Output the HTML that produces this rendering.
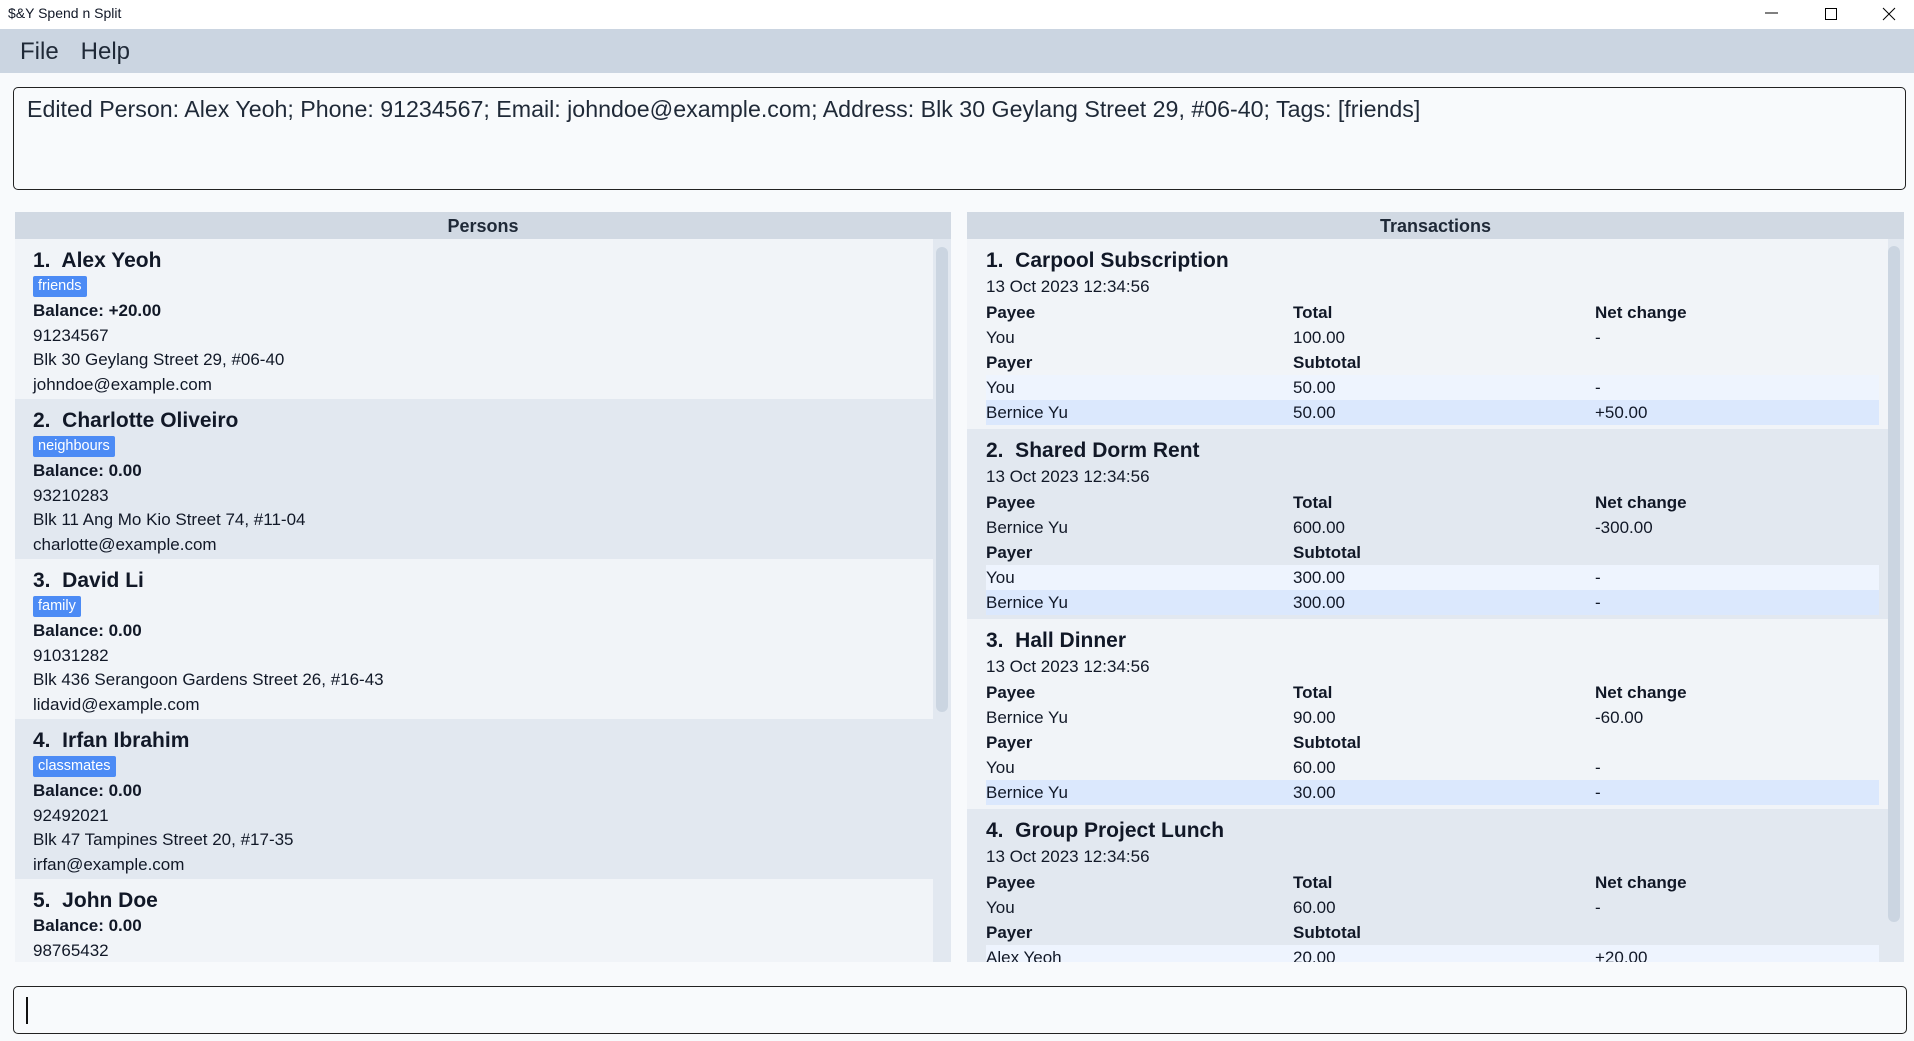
<!DOCTYPE html>
<html><head><meta charset="utf-8"><style>
*{margin:0;padding:0;box-sizing:border-box}
body{width:1914px;height:1041px;background:#f8fafc;font-family:"Liberation Sans",sans-serif;color:#111827;position:relative;overflow:hidden}
.abs{position:absolute}
#title{left:0;top:0;width:1914px;height:29px;background:#fff;font-size:14px;line-height:22px}
#menu{left:0;top:29px;width:1914px;height:44px;background:#cbd5e1;font-size:24px;line-height:46px;color:#1f2937}
#result{left:13px;top:87px;width:1893px;height:103px;border:1.5px solid #222;border-radius:5px;font-size:23.2px;padding:8px 13px;color:#1f2937}
.panel{top:212px;height:750px;overflow:hidden;background:#e2e8f0}
.hdr{height:27px;background:#d1d9e3;text-align:center;font-weight:bold;font-size:18px;line-height:28px;color:#1f2937}
.pcard{height:160px;padding:9px 0 0 18px;font-size:17px}
.odd{background:#f1f4f8}.even{background:#e2e8f0}
.name{font-size:21px;font-weight:bold;line-height:26px}
.tag{display:inline-block;background:#4c8bf5;color:#fff;font-size:14.5px;line-height:21px;padding:0 5px;border-radius:2px;margin:2px 0}
.ln{line-height:24.5px}
.b{font-weight:bold}
.tcard{height:190px;padding:9px 0 0 19px;font-size:17px}
.row{display:flex;height:25px;line-height:25px;width:893px}
.row div:nth-child(1){width:307px}.row div:nth-child(2){width:302px}
.h1{background:#eef4fe}.h2{background:#dbe8fd}
.sb{background:#cbd5e1;border-radius:6px;width:12px}
#cmd{left:13px;top:986px;width:1894px;height:48px;border:1.5px solid #222;border-radius:5px}
</style></head><body>
<div id="title" class="abs"><span style="position:absolute;left:8px;top:2px">$&amp;Y Spend n Split</span>
<svg class="abs" style="left:1765px;top:4px" width="140" height="20"><line x1="0" y1="9" x2="13" y2="9" stroke="#000"/><rect x="60.5" y="4.5" width="11" height="11" fill="none" stroke="#000"/><path d="M118 4L130 16M130 4L118 16" stroke="#000"/></svg></div>
<div id="menu" class="abs"><span style="margin-left:20px">File</span><span style="margin-left:22px">Help</span></div>
<div id="result" class="abs">Edited Person: Alex Yeoh; Phone: 91234567; Email: johndoe@example.com; Address: Blk 30 Geylang Street 29, #06-40; Tags: [friends]</div>

<div class="panel abs" style="left:15px;width:936px">
<div class="hdr">Persons</div>
<div style="width:918px">
<div class="pcard odd"><div class="name">1.&nbsp; Alex Yeoh</div><span class="tag">friends</span><div class="ln b">Balance: +20.00</div><div class="ln">91234567</div><div class="ln">Blk 30 Geylang Street 29, #06-40</div><div class="ln">johndoe@example.com</div></div>
<div class="pcard even"><div class="name">2.&nbsp; Charlotte Oliveiro</div><span class="tag">neighbours</span><div class="ln b">Balance: 0.00</div><div class="ln">93210283</div><div class="ln">Blk 11 Ang Mo Kio Street 74, #11-04</div><div class="ln">charlotte@example.com</div></div>
<div class="pcard odd"><div class="name">3.&nbsp; David Li</div><span class="tag">family</span><div class="ln b">Balance: 0.00</div><div class="ln">91031282</div><div class="ln">Blk 436 Serangoon Gardens Street 26, #16-43</div><div class="ln">lidavid@example.com</div></div>
<div class="pcard even"><div class="name">4.&nbsp; Irfan Ibrahim</div><span class="tag">classmates</span><div class="ln b">Balance: 0.00</div><div class="ln">92492021</div><div class="ln">Blk 47 Tampines Street 20, #17-35</div><div class="ln">irfan@example.com</div></div>
<div class="pcard odd"><div class="name">5.&nbsp; John Doe</div><div class="ln b">Balance: 0.00</div><div class="ln">98765432</div></div>
</div>
<div class="sb abs" style="left:921px;top:35px;height:465px"></div>
</div>

<div class="panel abs" style="left:967px;width:937px">
<div class="hdr">Transactions</div>
<div style="width:921px">
<div class="tcard odd"><div class="name">1.&nbsp; Carpool Subscription</div><div style="line-height:26px">13 Oct 2023 12:34:56</div>
<div class="row b"><div>Payee</div><div>Total</div><div>Net change</div></div>
<div class="row"><div>You</div><div>100.00</div><div>-</div></div>
<div class="row b"><div>Payer</div><div>Subtotal</div><div></div></div>
<div class="row h1"><div>You</div><div>50.00</div><div>-</div></div>
<div class="row h2"><div>Bernice Yu</div><div>50.00</div><div>+50.00</div></div></div>
<div class="tcard even"><div class="name">2.&nbsp; Shared Dorm Rent</div><div style="line-height:26px">13 Oct 2023 12:34:56</div>
<div class="row b"><div>Payee</div><div>Total</div><div>Net change</div></div>
<div class="row"><div>Bernice Yu</div><div>600.00</div><div>-300.00</div></div>
<div class="row b"><div>Payer</div><div>Subtotal</div><div></div></div>
<div class="row h1"><div>You</div><div>300.00</div><div>-</div></div>
<div class="row h2"><div>Bernice Yu</div><div>300.00</div><div>-</div></div></div>
<div class="tcard odd"><div class="name">3.&nbsp; Hall Dinner</div><div style="line-height:26px">13 Oct 2023 12:34:56</div>
<div class="row b"><div>Payee</div><div>Total</div><div>Net change</div></div>
<div class="row"><div>Bernice Yu</div><div>90.00</div><div>-60.00</div></div>
<div class="row b"><div>Payer</div><div>Subtotal</div><div></div></div>
<div class="row"><div>You</div><div>60.00</div><div>-</div></div>
<div class="row h2"><div>Bernice Yu</div><div>30.00</div><div>-</div></div></div>
<div class="tcard even"><div class="name">4.&nbsp; Group Project Lunch</div><div style="line-height:26px">13 Oct 2023 12:34:56</div>
<div class="row b"><div>Payee</div><div>Total</div><div>Net change</div></div>
<div class="row"><div>You</div><div>60.00</div><div>-</div></div>
<div class="row b"><div>Payer</div><div>Subtotal</div><div></div></div>
<div class="row h1"><div>Alex Yeoh</div><div>20.00</div><div>+20.00</div></div></div>
</div>
<div class="sb abs" style="left:921px;top:34px;height:676px"></div>
</div>

<div id="cmd" class="abs"><div class="abs" style="left:12px;top:10px;width:2px;height:27px;background:#111"></div></div>
</body></html>
